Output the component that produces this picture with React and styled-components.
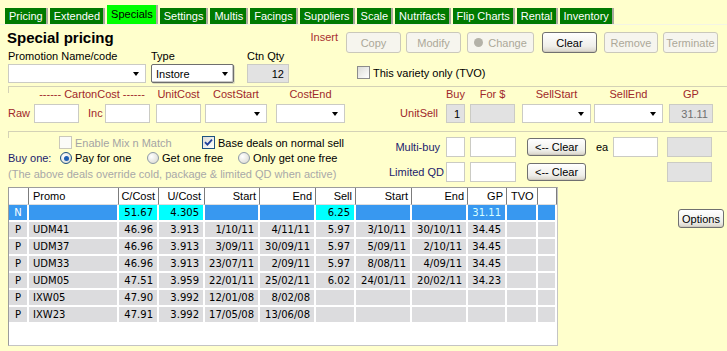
import React from 'react';
import styled, { createGlobalStyle, css } from 'styled-components';

const Global = createGlobalStyle`
  html, body { margin: 0; padding: 0; background: #ffffcc; }
  body { font-family: "Liberation Sans", Arial, sans-serif; font-size: 11px; color: #000; }
  * { box-sizing: border-box; }
`;

const Page = styled.div`
  width: 727px;
  height: 351px;
  overflow: hidden;
  background: #ffffcc;
`;

/* ---------- tabs ---------- */
const TabBar = styled.div`
  display: flex;
  align-items: flex-end;
  gap: 2px;
  height: 25px;
  padding-left: 5px;
  border-bottom: 1px solid #f4f4e4;
`;

const Tab = styled.div`
  height: ${p => (p.$active ? 19 : 16)}px;
  line-height: ${p => (p.$active ? 19 : 16)}px;
  padding: 0 3px 0 4px;
  background: ${p => (p.$active ? '#00ff00' : '#007a00')};
  color: ${p => (p.$active ? '#000' : '#fff')};
  border-right: 2px solid #a9a9a0;
  white-space: nowrap;
`;

/* ---------- generic bits ---------- */
const Content = styled.div`
  padding-left: 8px;
`;

const Row = styled.div`
  display: flex;
  align-items: ${p => p.$align || 'center'};
  justify-content: ${p => p.$justify || 'flex-start'};
  height: ${p => (p.$h ? p.$h + 'px' : 'auto')};
  margin-top: ${p => p.$mt || 0}px;
`;

const Col = styled.div`
  display: flex;
  flex-direction: column;
  width: ${p => (p.$w ? p.$w + 'px' : 'auto')};
  margin-left: ${p => p.$ml || 0}px;
  margin-top: ${p => p.$mt || 0}px;
`;

const Text = styled.span`
  display: inline-block;
  color: ${p => p.$c || '#000'};
  width: ${p => (p.$w ? p.$w + 'px' : 'auto')};
  margin-left: ${p => p.$ml || 0}px;
  text-align: ${p => p.$ta || 'left'};
  white-space: nowrap;
  line-height: ${p => p.$lh || 14}px;
`;

const Spacer = styled.div`
  width: ${p => p.$w}px;
  flex: none;
`;

const Field = styled.div`
  flex: none;
  width: ${p => p.$w}px;
  height: ${p => p.$h || 19}px;
  margin-left: ${p => p.$ml || 0}px;
  border: 1px solid #cbcbc4;
  background: ${p => (p.$gray ? '#e2e2e2' : '#fff')};
  display: flex;
  align-items: center;
  justify-content: flex-end;
  padding: 0 4px;
  color: ${p => (p.$dim ? '#707070' : '#000')};
`;

const Combo = styled.div`
  flex: none;
  width: ${p => p.$w}px;
  height: 19px;
  margin-left: ${p => p.$ml || 0}px;
  background: #fff;
  display: flex;
  align-items: center;
  justify-content: space-between;
  padding: 0 6px 0 4px;
  border: 1px solid #cbcbc4;
  ${p =>
    p.$raised &&
    css`
      border: 1px solid #6e6e6e;
      border-radius: 2px;
      box-shadow: inset -1px -1px 0 #c8c8c8, 1px 1px 0 #dcdcc0;
      padding-right: 5px;
    `}
`;

const Arrow = styled.span`
  width: 0;
  height: 0;
  border-left: 3.5px solid transparent;
  border-right: 3.5px solid transparent;
  border-top: 4px solid #000;
`;

const Btn = styled.button`
  flex: none;
  width: ${p => p.$w}px;
  height: ${p => p.$h || 21}px;
  margin-left: ${p => p.$ml || 0}px;
  padding: 0;
  font-family: "Liberation Sans", Arial, sans-serif;
  font-size: 11px;
  border-radius: 3px;
  display: flex;
  align-items: center;
  justify-content: center;
  gap: 5px;
  ${p =>
    p.disabled
      ? css`
          color: #aca899;
          border: 1px solid #cac8bb;
          background: #f6f5ee;
        `
      : css`
          color: #000;
          border: 1px solid #707070;
          background: linear-gradient(#ffffff, #efefea 70%, #d8d4ca);
          box-shadow: inset 0 -1px 0 #cfcbc0;
        `}
`;

const Dot = styled.span`
  width: 9px;
  height: 9px;
  border-radius: 50%;
  background: #b4b2a8;
`;

const Title = styled.div`
  font-size: 15px;
  font-weight: bold;
  margin-left: -1px;
`;

/* ---------- check / radio ---------- */
const Box = styled.span`
  flex: none;
  width: 13px;
  height: 13px;
  display: inline-flex;
  align-items: center;
  justify-content: center;
  border: 1px solid ${p => (p.$disabled ? '#cac8bb' : p.$plain ? '#8c8c8c' : '#1c5180')};
  background: ${p => (p.$disabled ? '#fbfbf8' : 'linear-gradient(135deg, #dcdcd7, #ffffff)')};
`;

const Radio = styled.span`
  flex: none;
  width: 12px;
  height: 12px;
  border-radius: 50%;
  display: inline-flex;
  align-items: center;
  justify-content: center;
  border: 1px solid ${p => (p.$on ? '#1c5180' : '#8e9aa6')};
  background: radial-gradient(circle at 35% 35%, #ffffff, #d6d6ce);
  &::after {
    content: '';
    width: 5px;
    height: 5px;
    border-radius: 50%;
    background: ${p => (p.$on ? '#1e5fb4' : 'transparent')};
  }
`;

const Choice = styled.label`
  flex: none;
  display: flex;
  align-items: center;
  gap: ${p => p.$gap || 3}px;
  width: ${p => (p.$w ? p.$w + 'px' : 'auto')};
  margin-left: ${p => p.$ml || 0}px;
  color: ${p => p.$c || '#000'};
  white-space: nowrap;
`;

const Check = () => (
  <svg width="9" height="9" viewBox="0 0 9 9">
    <path d="M1 4.2 L3.4 6.6 L8 1.6" stroke="#21409a" strokeWidth="1.8" fill="none" />
  </svg>
);

/* ---------- sections ---------- */
const Section = styled.div`
  position: relative;
  border-top: 1px solid #d4d2b6;
  margin-top: ${p => p.$mt || 0}px;
  height: ${p => p.$h}px;
  &::before {
    content: '';
    position: absolute;
    left: 0;
    top: 0;
    width: 1px;
    height: 6px;
    background: #d4d2b6;
  }
`;

const Group = styled.div`
  flex: none;
  display: flex;
  flex-direction: column;
  align-items: stretch;
  margin-left: ${p => p.$ml || 0}px;
`;

const GroupLabel = styled.div`
  text-align: center;
  color: #a0282a;
  line-height: 14px;
  height: 14px;
  margin-bottom: 3px;
  white-space: nowrap;
`;

const Side = styled.div`
  flex: none;
  height: 19px;
  line-height: 19px;
  width: ${p => p.$w}px;
  margin-left: ${p => p.$ml || 0}px;
  text-align: ${p => p.$ta || 'left'};
  color: ${p => p.$c || '#a0282a'};
  white-space: nowrap;
`;

/* ---------- grid ---------- */
const GridArea = styled.div`
  display: flex;
  align-items: flex-start;
`;

const GridBox = styled.div`
  flex: none;
  width: 550px;
  height: 159px;
  border: 1px solid #9c9c9c;
  border-right-color: #c4c4c4;
  border-bottom-color: #c4c4c4;
  background: #fff;
  overflow: hidden;
`;

const Table = styled.table`
  table-layout: fixed;
  border-collapse: separate;
  border-spacing: 0;
  width: 548px;
  font-family: "DejaVu Sans", Verdana, sans-serif;
  font-size: 10px;
`;

const Th = styled.th`
  height: 17px;
  padding: 0 ${p => (p.$ta === 'left' ? 0 : 3)}px 0 ${p => (p.$ta === 'left' ? 4 : 0)}px;
  font-family: "Liberation Sans", Arial, sans-serif;
  font-size: 11px;
  font-weight: normal;
  text-align: ${p => p.$ta || 'right'};
  background: #fff;
  border-right: 1px solid #7c7c7c;
  border-bottom: 1px solid #dedede;
  white-space: nowrap;
  overflow: hidden;
`;

const Td = styled.td`
  height: 17px;
  padding: 0 ${p => (p.$ta === 'right' ? 4 : 0)}px 0 ${p => (p.$ta === 'left' ? 4 : 0)}px;
  text-align: ${p => p.$ta || 'right'};
  background: ${p => p.$bg};
  color: ${p => p.$fg};
  border-right: 2px solid #fff;
  border-bottom: 2px solid #fff;
  white-space: nowrap;
  overflow: hidden;
`;

const OptionsWrap = styled.div`
  margin-left: auto;
  margin-right: 3px;
  margin-top: 22px;
`;

/* ---------- data ---------- */
const tabs = ['Pricing', 'Extended', 'Specials', 'Settings', 'Multis', 'Facings', 'Suppliers', 'Scale', 'Nutrifacts', 'Flip Charts', 'Rental', 'Inventory'];

const cols = [
  { h: '', w: 20, a: 'center' },
  { h: 'Promo', w: 90, a: 'left' },
  { h: 'C/Cost', w: 40 },
  { h: 'U/Cost', w: 46 },
  { h: 'Start', w: 55 },
  { h: 'End', w: 56 },
  { h: 'Sell', w: 40 },
  { h: 'Start', w: 56 },
  { h: 'End', w: 56 },
  { h: 'GP', w: 39 },
  { h: 'TVO', w: 31, a: 'left' },
  { h: '', w: 19 },
];

const rows = [
  ['N', '', '51.67', '4.305', '', '', '6.25', '', '', '31.11', '', ''],
  ['P', 'UDM41', '46.96', '3.913', '1/10/11', '4/11/11', '5.97', '3/10/11', '30/10/11', '34.45', '', ''],
  ['P', 'UDM37', '46.96', '3.913', '3/09/11', '30/09/11', '5.97', '5/09/11', '2/10/11', '34.45', '', ''],
  ['P', 'UDM33', '46.96', '3.913', '23/07/11', '2/09/11', '5.97', '8/08/11', '4/09/11', '34.45', '', ''],
  ['P', 'UDM05', '47.51', '3.959', '22/01/11', '25/02/11', '6.02', '24/01/11', '20/02/11', '34.23', '', ''],
  ['P', 'IXW05', '47.90', '3.992', '12/01/08', '8/02/08', '', '', '', '', '', ''],
  ['P', 'IXW23', '47.91', '3.992', '17/05/08', '13/06/08', '', '', '', '', '', ''],
];

const cyanCols = [2, 3, 6];

function cellColors(sel, ci) {
  if (!sel) return { bg: '#dcdcde', fg: '#000' };
  if (cyanCols.includes(ci)) return { bg: '#00ffff', fg: '#000' };
  if (ci === 9) return { bg: '#3898f0', fg: '#d8ffff' };
  return { bg: '#3898f0', fg: '#fff' };
}

const NAVY = '#1c1c6c';

export default function App() {
  return (
    <Page>
      <Global />
      <TabBar>
        {tabs.map(t => (
          <Tab key={t} $active={t === 'Specials'}>{t}</Tab>
        ))}
      </TabBar>

      <Content>
        {/* top block */}
        <Row $align="flex-start">
          <Col $w={330}>
            <Row $h={24} $justify="space-between">
              <Title>Special pricing</Title>
              <Text $c="#a83030">Insert</Text>
            </Row>
            <Row $h={14}>
              <Text $w={143}>Promotion Name/code</Text>
              <Text $w={96}>Type</Text>
              <Text>Ctn Qty</Text>
            </Row>
            <Row $mt={1}>
              <Combo $w={138}><span /><Arrow /></Combo>
              <Combo $w={83} $ml={5} $raised>
                <span>Instore</span>
                <Arrow />
              </Combo>
              <Field $w={42} $ml={13} $gray>12</Field>
            </Row>
          </Col>
          <Col $ml={8}>
            <Row $mt={7}>
              <Btn $w={55} disabled>Copy</Btn>
              <Btn $w={55} $ml={5} disabled>Modify</Btn>
              <Btn $w={67} $ml={6} disabled><Dot />Change</Btn>
              <Btn $w={55} $ml={8}>Clear</Btn>
              <Btn $w={54} $ml={7} disabled>Remove</Btn>
              <Btn $w={55} $ml={5} disabled>Terminate</Btn>
            </Row>
            <Row $mt={13}>
              <Choice $ml={11}>
                <Box $plain />
                This variety only (TVO)
              </Choice>
            </Row>
          </Col>
        </Row>

        {/* cost / sell */}
        <Section $mt={3} $h={45}>
          <Row $align="flex-end">
            <Side $w={26}>Raw</Side>
            <Group>
              <GroupLabel>------ CartonCost ------</GroupLabel>
              <Row>
                <Field $w={45} />
                <Side $w={17} $ml={9}>Inc</Side>
                <Field $w={45} />
              </Row>
            </Group>
            <Group $ml={6}>
              <GroupLabel>UnitCost</GroupLabel>
              <Field $w={45} />
            </Group>
            <Group $ml={4}>
              <GroupLabel>CostStart</GroupLabel>
              <Combo $w={62}><span /><Arrow /></Combo>
            </Group>
            <Group $ml={9}>
              <GroupLabel>CostEnd</GroupLabel>
              <Combo $w={69}><span /><Arrow /></Combo>
            </Group>
            <Side $w={43} $ml={50} $ta="right">UnitSell</Side>
            <Group $ml={8}>
              <GroupLabel>Buy</GroupLabel>
              <Field $w={19} $gray>1</Field>
            </Group>
            <Group $ml={5}>
              <GroupLabel>For $</GroupLabel>
              <Field $w={45} $gray />
            </Group>
            <Group $ml={7}>
              <GroupLabel>SellStart</GroupLabel>
              <Combo $w={69}><span /><Arrow /></Combo>
            </Group>
            <Group $ml={3}>
              <GroupLabel>SellEnd</GroupLabel>
              <Combo $w={69}><span /><Arrow /></Combo>
            </Group>
            <Group $ml={6}>
              <GroupLabel>GP</GroupLabel>
              <Field $w={44} $gray $dim>31.11</Field>
            </Group>
          </Row>
        </Section>

        {/* deals */}
        <Section $h={56}>
          <Row $align="flex-start">
            <Col $w={381}>
              <Row $h={15} $mt={3}>
                <Choice $w={143} $ml={51} $c="#a4a4a4">
                  <Box $disabled />
                  Enable Mix n Match
                </Choice>
                <Choice>
                  <Box><Check /></Box>
                  Base deals on normal sell
                </Choice>
              </Row>
              <Row $h={16}>
                <Text $w={52} $c={NAVY}>Buy one:</Text>
                <Choice $w={87}><Radio $on />Pay for one</Choice>
                <Choice $w={91}><Radio />Get one free</Choice>
                <Choice><Radio />Only get one free</Choice>
              </Row>
              <Row $h={16}>
                <Text $c="#a8a8a8">(The above deals override cold, package &amp; limited QD when active)</Text>
              </Row>
            </Col>
            <Col $mt={5}>
              <Row>
                <Side $w={51} $ta="right" $c={NAVY}>Multi-buy</Side>
                <Field $w={19} $h={20} $ml={6} />
                <Field $w={46} $h={20} $ml={5} />
                <Btn $w={59} $h={18} $ml={11}>&lt;-- Clear</Btn>
                <Side $w={13} $ml={10} $c="#000">ea</Side>
                <Field $w={45} $h={20} $ml={4} />
                <Field $w={45} $h={20} $ml={9} $gray />
              </Row>
              <Row $mt={5}>
                <Side $w={51} $ta="right" $c={NAVY}>Limited QD</Side>
                <Field $w={19} $h={20} $ml={6} />
                <Field $w={46} $h={20} $ml={5} />
                <Btn $w={59} $h={18} $ml={11}>&lt;-- Clear</Btn>
                <Spacer $w={72} />
                <Field $w={45} $h={20} $ml={9} $gray />
              </Row>
            </Col>
          </Row>
        </Section>

        <GridArea>
          <GridBox>
            <Table>
              <colgroup>
                {cols.map((c, i) => (
                  <col key={i} style={{ width: c.w }} />
                ))}
              </colgroup>
              <thead>
                <tr>
                  {cols.map((c, i) => (
                    <Th key={i} $ta={c.a}>{c.h}</Th>
                  ))}
                </tr>
              </thead>
              <tbody>
                {rows.map((r, ri) => (
                  <tr key={ri}>
                    {r.map((v, ci) => {
                      const { bg, fg } = cellColors(ri === 0, ci);
                      const a = cols[ci].a === 'center' ? 'center' : cols[ci].a === 'left' ? 'left' : 'right';
                      return (
                        <Td key={ci} $bg={bg} $fg={fg} $ta={a}>{v}</Td>
                      );
                    })}
                  </tr>
                ))}
              </tbody>
            </Table>
          </GridBox>
          <OptionsWrap>
            <Btn $w={46} $h={19}>Options</Btn>
          </OptionsWrap>
        </GridArea>
      </Content>
    </Page>
  );
}
